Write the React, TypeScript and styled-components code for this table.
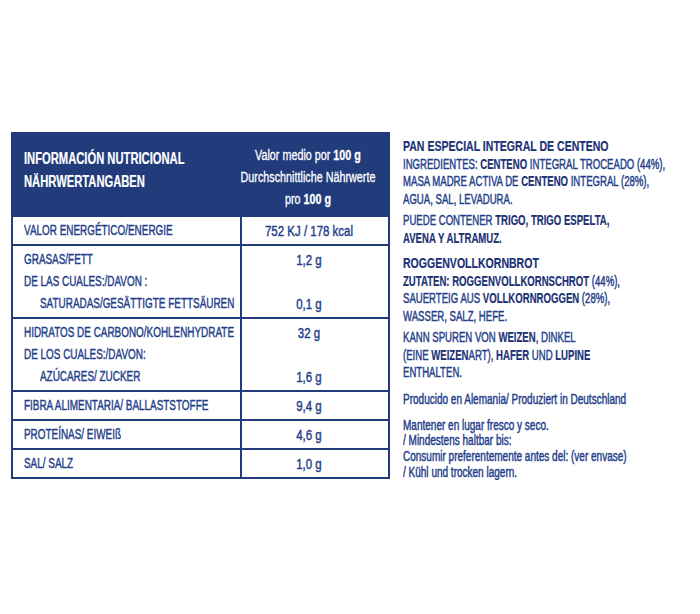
import styled, { createGlobalStyle } from "styled-components";

const NAVY = "#213b7b";
const INK = "#233e8a";
const DARK = "#1b3176";

const GlobalStyle = createGlobalStyle`
  html, body {
    margin: 0;
    background: #ffffff;
  }
  body {
    font-family: "Liberation Sans", Arial, sans-serif;
    color: ${INK};
    -webkit-text-stroke: 0.45px currentColor;
  }
`;

const Page = styled.div`
  display: flex;
  align-items: flex-start;
  gap: 13px;
  width: 700px;
  box-sizing: border-box;
  padding: 132px 0 0 11px;
`;

const Table = styled.div`
  flex: none;
  width: 379px;
  box-sizing: border-box;
  border: 2px solid ${NAVY};
  display: flex;
  flex-direction: column;
`;

const Row = styled.div<{ $head?: boolean }>`
  display: grid;
  grid-template-columns: 227px 1fr;
  border-top: ${(p) => (p.$head ? "none" : `2px solid ${NAVY}`)};
  background: ${(p) => (p.$head ? NAVY : "transparent")};
  color: ${(p) => (p.$head ? "#ffffff" : INK)};
`;

const HeadTitle = styled.div`
  height: 81px;
  box-sizing: border-box;
  padding: 13px 0 0 11px;
  font-size: 16px;
  font-weight: 700;
  line-height: 23px;
  -webkit-text-stroke: 0.2px currentColor;
`;

const HeadNote = styled.div`
  padding: 10px 12px 0 0;
  font-size: 14px;
  line-height: 22px;
  -webkit-text-stroke: 0.3px currentColor;
`;

const Label = styled.div`
  padding: 2px 0 3px 11px;
  font-size: 15.5px;
  line-height: 22px;
`;

const Value = styled.div`
  border-left: 2px solid ${NAVY};
  padding: 3px 12px 2px 0;
  font-size: 15.5px;
  line-height: 22px;
`;

// the label's typeface is a narrow grotesque; squeeze each line horizontally.
// centred lines get room on both sides so wide text stays centred before the squeeze
const Line = styled.div<{ $k: number; $center?: boolean; $indent?: boolean }>`
  margin: ${(p) => (p.$center ? "0 -60px" : p.$indent ? "0 0 0 16px" : "0")};
  text-align: ${(p) => (p.$center ? "center" : "left")};
  white-space: nowrap;
  transform: scaleX(${(p) => p.$k});
  transform-origin: ${(p) => (p.$center ? "center" : "left")} center;
`;

const B = styled.b`
  font-weight: 700;
  color: ${DARK};
  -webkit-text-stroke: 0.2px currentColor;
`;

const Info = styled.div`
  flex: 1;
  min-width: 0;
  overflow: hidden;
  display: flex;
  flex-direction: column;
  padding-top: 4px;
`;

const Block = styled.div<{ $gap?: number; $lh?: number }>`
  margin-top: ${(p) => p.$gap ?? 0}px;
  font-size: 14px;
  line-height: ${(p) => p.$lh ?? 17.5}px;
`;

const Title = styled(Line)`
  font-size: 15.5px;
  line-height: 19.5px;
  font-weight: 700;
  color: ${DARK};
  -webkit-text-stroke: 0.2px currentColor;
`;

type Nutrient = { label: string[]; values: string[]; indentLast?: boolean };

const nutrients: Nutrient[] = [
  { label: ["VALOR ENERGÉTICO/ENERGIE"], values: ["752 KJ / 178 kcal"] },
  {
    label: ["GRASAS/FETT", "DE LAS CUALES:/DAVON :", "SATURADAS/GESÄTTIGTE FETTSÄUREN"],
    values: ["1,2 g", "\u00a0", "0,1 g"],
    indentLast: true,
  },
  {
    label: ["HIDRATOS DE CARBONO/KOHLENHYDRATE", "DE LOS CUALES:/DAVON:", "AZÚCARES/ ZUCKER"],
    values: ["32 g", "\u00a0", "1,6 g"],
    indentLast: true,
  },
  { label: ["FIBRA ALIMENTARIA/ BALLASTSTOFFE"], values: ["9,4 g"] },
  { label: ["PROTEÍNAS/ EIWEIß"], values: ["4,6 g"] },
  { label: ["SAL/ SALZ"], values: ["1,0 g"] },
];

const CAPS = 0.685;
const MIXED = 0.715;

export default function App() {
  return (
    <>
      <GlobalStyle />
      <Page>
        <Table>
          <Row $head>
            <HeadTitle>
              <Line $k={0.7}>INFORMACIÓN NUTRICIONAL</Line>
              <Line $k={0.7}>NÄHRWERTANGABEN</Line>
            </HeadTitle>
            <HeadNote>
              <Line $k={0.77} $center>
                Valor medio por <b>100 g</b>
              </Line>
              <Line $k={0.77} $center>
                Durchschnittliche Nährwerte
              </Line>
              <Line $k={0.77} $center>
                pro <b>100 g</b>
              </Line>
            </HeadNote>
          </Row>
          {nutrients.map((n) => (
            <Row key={n.label[0]}>
              <Label>
                {n.label.map((l, i) => (
                  <Line key={l} $k={0.64} $indent={n.indentLast && i === n.label.length - 1}>
                    {l}
                  </Line>
                ))}
              </Label>
              <Value>
                {n.values.map((v, i) => (
                  <Line key={i} $k={0.74} $center>
                    {v}
                  </Line>
                ))}
              </Value>
            </Row>
          ))}
        </Table>

        <Info>
          <Block>
            <Title $k={0.68}>PAN ESPECIAL INTEGRAL DE CENTENO</Title>
            <Line $k={CAPS}>
              INGREDIENTES: <B>CENTENO</B> INTEGRAL TROCEADO (44%),
            </Line>
            <Line $k={CAPS}>
              MASA MADRE ACTIVA DE <B>CENTENO</B> INTEGRAL (28%),
            </Line>
            <Line $k={CAPS}>AGUA, SAL, LEVADURA.</Line>
          </Block>
          <Block $gap={4}>
            <Line $k={CAPS}>
              PUEDE CONTENER <B>TRIGO, TRIGO ESPELTA,</B>
            </Line>
            <Line $k={CAPS}>
              <B>AVENA Y ALTRAMUZ.</B>
            </Line>
          </Block>
          <Block $gap={6}>
            <Title $k={0.68}>ROGGENVOLLKORNBROT</Title>
            <Line $k={CAPS}>
              <B>ZUTATEN: ROGGENVOLLKORNSCHROT</B> (44%),
            </Line>
            <Line $k={CAPS}>
              SAUERTEIG AUS <B>VOLLKORNROGGEN</B> (28%),
            </Line>
            <Line $k={CAPS}>WASSER, SALZ, HEFE.</Line>
          </Block>
          <Block $gap={4}>
            <Line $k={CAPS}>
              KANN SPUREN VON <B>WEIZEN</B>, DINKEL
            </Line>
            <Line $k={CAPS}>
              (EINE <B>WEIZEN</B>ART), <B>HAFER</B> UND <B>LUPINE</B>
            </Line>
            <Line $k={CAPS}>ENTHALTEN.</Line>
          </Block>
          <Block $gap={9} $lh={16}>
            <Line $k={MIXED}>Producido en Alemania/ Produziert in Deutschland</Line>
          </Block>
          <Block $gap={11} $lh={15.7}>
            <Line $k={MIXED}>Mantener en lugar fresco y seco.</Line>
            <Line $k={MIXED}>/ Mindestens haltbar bis:</Line>
            <Line $k={MIXED}>Consumir preferentemente antes del: (ver envase)</Line>
            <Line $k={MIXED}>/ Kühl und trocken lagern.</Line>
          </Block>
        </Info>
      </Page>
    </>
  );
}
